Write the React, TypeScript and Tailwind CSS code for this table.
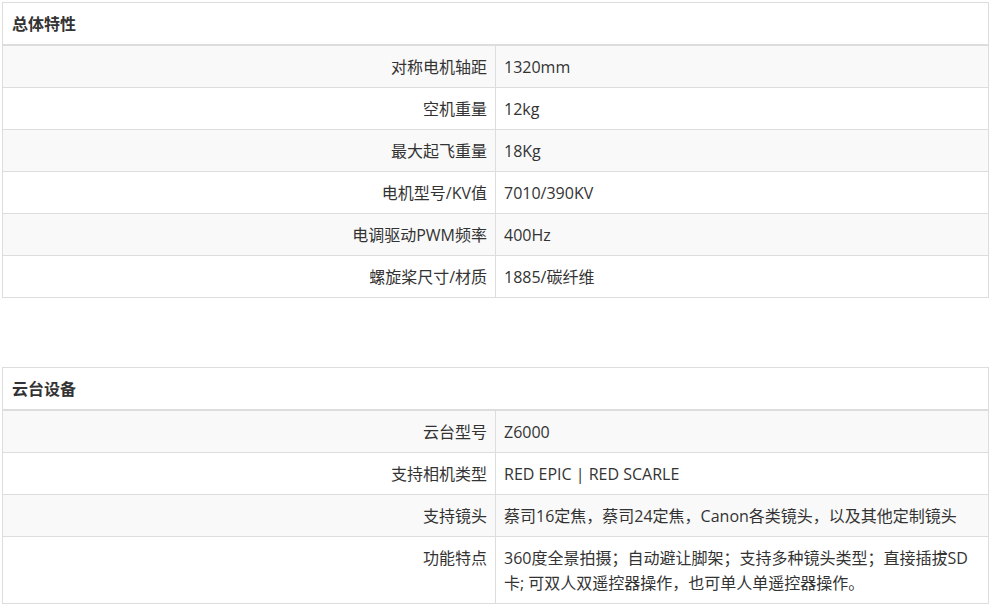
type Row = [string, string[]]

const general: Row[] = [
  ['对称电机轴距', ['1320mm']],
  ['空机重量', ['12kg']],
  ['最大起飞重量', ['18Kg']],
  ['电机型号/KV值', ['7010/390KV']],
  ['电调驱动PWM频率', ['400Hz']],
  ['螺旋桨尺寸/材质', ['1885/碳纤维']],
]

const gimbal: Row[] = [
  ['云台型号', ['Z6000']],
  ['支持相机类型', ['RED EPIC | RED SCARLE']],
  ['支持镜头', ['蔡司16定焦，蔡司24定焦，Canon各类镜头，以及其他定制镜头']],
  ['功能特点', ['360度全景拍摄；自动避让脚架；支持多种镜头类型；直接插拔SD', '卡; 可双人双遥控器操作，也可单人单遥控器操作。']],
]

function SpecTable({ title, rows }: { title: string; rows: Row[] }) {
  return (
    <table className="ml-[2px] w-[987px] table-fixed border-collapse border border-[#ddd] text-[16px] leading-[25px] text-[#333]">
      <thead>
        <tr>
          <th colSpan={2} className="border-b-2 border-[#ddd] px-[9px] pt-[9px] pb-[7px] text-left text-[16px] font-bold">
            {title}
          </th>
        </tr>
      </thead>
      <tbody>
        {rows.map(([label, value], i) => (
          <tr key={label} className={i % 2 === 0 ? 'bg-[#f9f9f9]' : 'bg-white'}>
            <td className="w-1/2 border border-[#ddd] px-[8px] pt-[9px] pb-[7px] text-right align-top">{label}</td>
            <td className="w-1/2 border border-[#ddd] px-[8px] pt-[9px] pb-[7px] text-left align-top">
              {value.map((line) => (
                <div key={line} className="whitespace-nowrap">{line}</div>
              ))}
            </td>
          </tr>
        ))}
      </tbody>
    </table>
  )
}

export default function App() {
  return (
    <div className="w-[993px] h-[607px] overflow-hidden bg-white pt-[2px] font-['Open_Sans','Noto_Sans_CJK_SC',sans-serif]">
      <SpecTable title="总体特性" rows={general} />
      <div className="h-[69px]"></div>
      <SpecTable title="云台设备" rows={gimbal} />
    </div>
  )
}
